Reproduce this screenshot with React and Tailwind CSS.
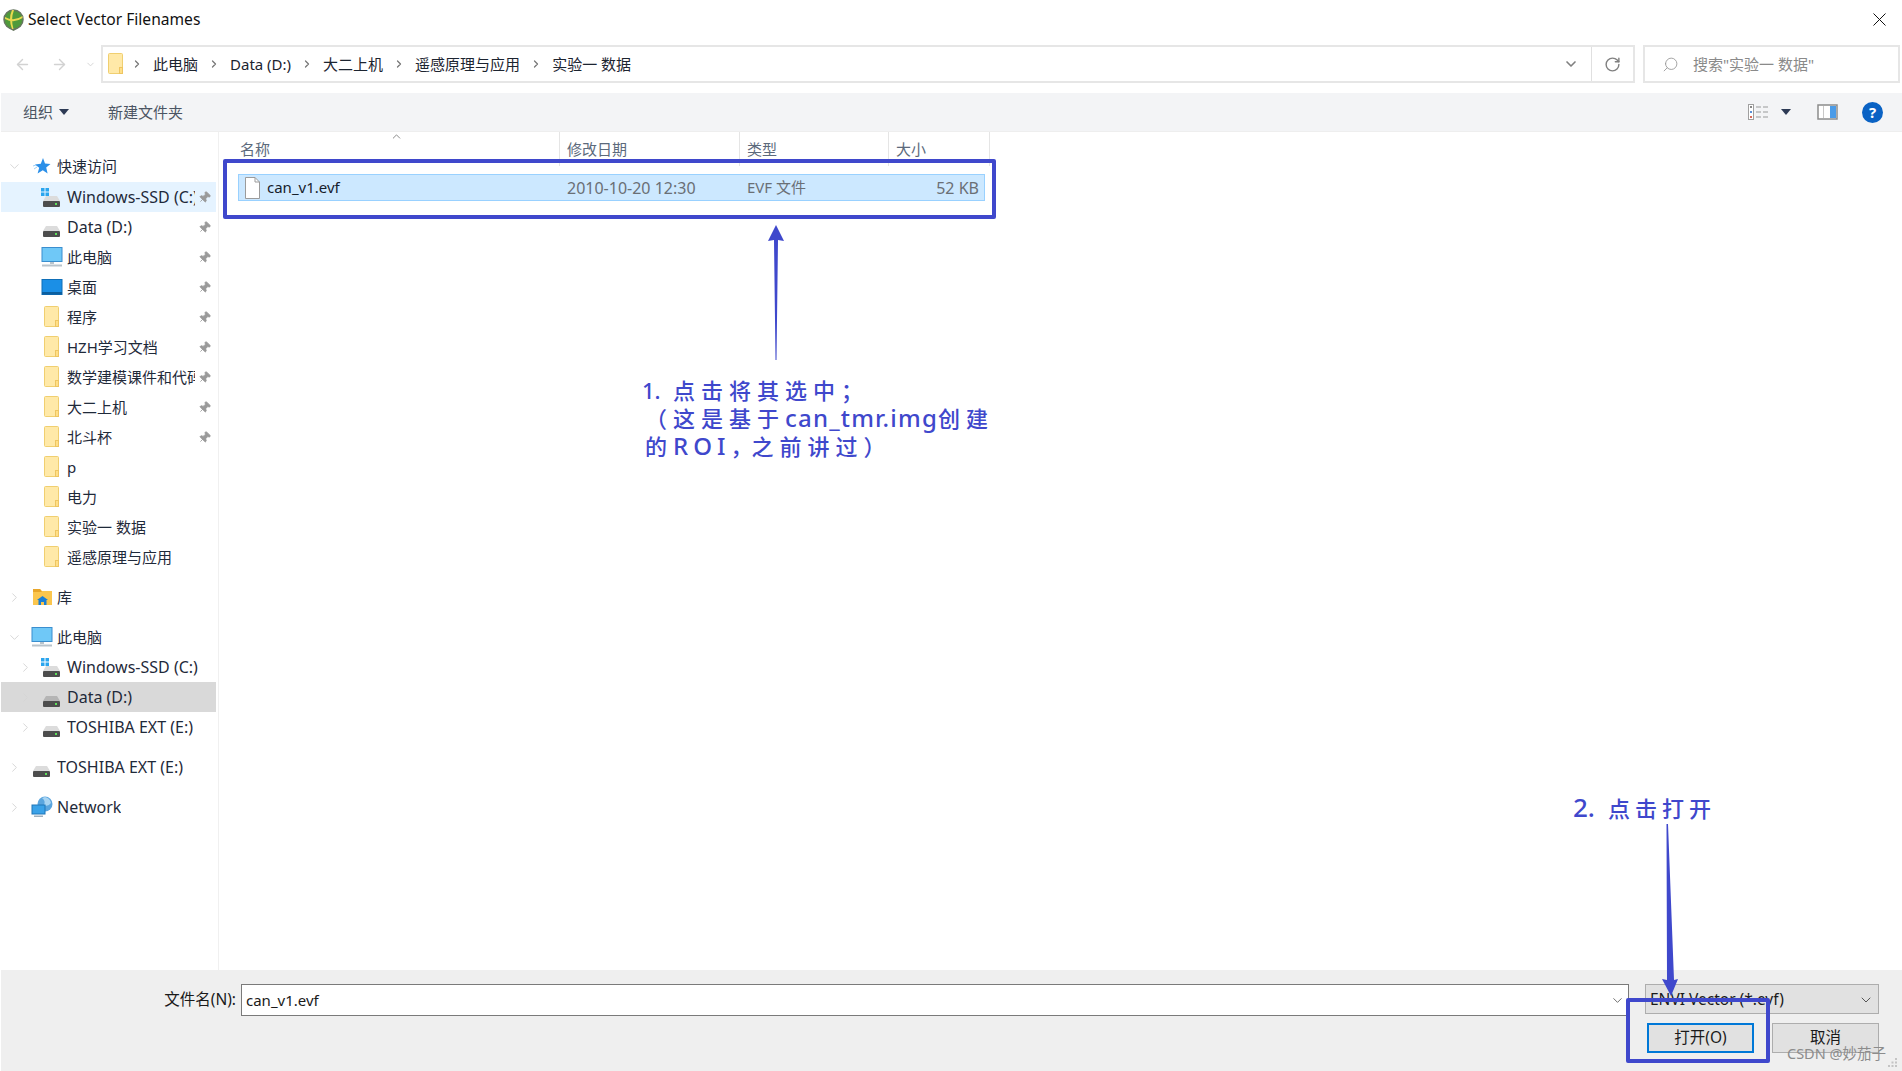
import React from 'react';
import { ArrowLeft, ArrowRight, ChevronDown, ChevronRight, Pin, RotateCw, Search } from 'lucide-react';

const BLUE = '#3f48cc';

const AppIcon = () => (
  <svg width="21" height="22" viewBox="0 0 21 22">
    <circle cx="10.5" cy="10.5" r="9.5" fill="#4f9a3a" stroke="#66755f" strokeWidth="1.5" />
    <path d="M2 8 Q11 13 19.5 7 L19.5 9 Q11 15 2 10Z" fill="#e9d94f" />
    <path d="M9 1 Q5 10 9 20 L10.5 20 Q7.5 10 11 1Z" fill="#e9d94f" />
    <path d="M7 20 L14 20 L10.5 22Z" fill="#66755f" />
  </svg>
);

const FolderIcon = () => (
  <svg width="22" height="22" viewBox="0 0 22 22">
    <rect x="3.5" y="0.5" width="14" height="20" rx="1" fill="#ffe9a8" stroke="#f0cf70" />
    <rect x="14.5" y="14.5" width="3" height="6" fill="#ffdf87" stroke="#eec562" />
  </svg>
);

const DriveIcon = ({ win, dark }) => (
  <svg width="22" height="22" viewBox="0 0 22 22">
    {win && (
      <g fill="#2ba5ee">
        <rect x="0" y="2" width="3.5" height="3.5" />
        <rect x="4.5" y="2" width="3.5" height="3.5" />
        <rect x="0" y="6.5" width="3.5" height="3.5" />
        <rect x="4.5" y="6.5" width="3.5" height="3.5" />
      </g>
    )}
    <path d="M5 10 L16 10 L19 15 L2 15Z" fill={dark ? '#b5b5b5' : '#dcdcdc'} />
    <rect x="2" y="15" width="17" height="6" rx="1" fill="#4d4d4d" />
    <rect x="14" y="17" width="2" height="2" fill="#5ee05a" />
  </svg>
);

const MonitorIcon = () => (
  <svg width="22" height="20" viewBox="0 0 22 20">
    <rect x="1" y="0.5" width="20" height="14" fill="#6fc8f7" stroke="#3a8ecf" />
    <rect x="9" y="15" width="4" height="2" fill="#b9c4cc" />
    <rect x="1" y="17.5" width="20" height="2" fill="#b9c4cc" />
  </svg>
);

const DesktopIcon = () => (
  <svg width="22" height="16" viewBox="0 0 22 16">
    <rect x="1" y="0.5" width="20" height="15" fill="#1b8fe6" stroke="#0f6fb8" />
    <rect x="1" y="13" width="20" height="2.5" fill="#0c5f9f" />
  </svg>
);

const StarIcon = () => (
  <svg width="18" height="18" viewBox="0 0 18 18">
    <path d="M10 1 L12 6.5 L17.5 7 L13.2 10.6 L14.6 16.5 L9.8 13.3 L4.6 16.5 L6.2 10.8 L2 7.5 L7.8 6.8Z" fill="#2b8fe8" />
    <path d="M1 12 L4 10 M0 9 L3 8" stroke="#9fd0f5" strokeWidth="1" />
  </svg>
);

const LibraryIcon = () => (
  <svg width="21" height="18" viewBox="0 0 21 18">
    <path d="M1 1 L8 1 L10 3 L20 3 L20 17 L1 17Z" fill="#fbc64e" />
    <path d="M1 1 L8 1 L10 4 L1 4Z" fill="#e8a62a" />
    <path d="M10.5 8 L16 12 L14.5 12 L14.5 17 L12 17 L12 14 L9 14 L9 17 L6.5 17 L6.5 12 L5 12Z" fill="#1a7fd6" />
  </svg>
);

const NetworkIcon = () => (
  <svg width="22" height="22" viewBox="0 0 22 22">
    <circle cx="14" cy="8" r="7.5" fill="#5aa5de" />
    <path d="M11 2 Q15 5 13 9 Q17 11 20 7 Q19 2 14 1Z" fill="#a8d4f2" />
    <rect x="1" y="9" width="13" height="9" fill="#3aa2e8" stroke="#1f76b8" />
    <rect x="3" y="19.5" width="9" height="1.5" fill="#9fb0bd" />
  </svg>
);

const quick = [
  { label: 'Windows-SSD (C:)', latin: true, icon: <DriveIcon win />, pinned: true, tone: 'hover' },
  { label: 'Data (D:)', latin: true, icon: <DriveIcon />, pinned: true },
  { label: '此电脑', icon: <MonitorIcon />, pinned: true },
  { label: '桌面', icon: <DesktopIcon />, pinned: true },
  { label: '程序', icon: <FolderIcon />, pinned: true },
  { label: 'HZH学习文档', icon: <FolderIcon />, pinned: true },
  { label: '数学建模课件和代码', icon: <FolderIcon />, pinned: true },
  { label: '大二上机', icon: <FolderIcon />, pinned: true },
  { label: '北斗杯', icon: <FolderIcon />, pinned: true },
  { label: 'p', icon: <FolderIcon /> },
  { label: '电力', icon: <FolderIcon /> },
  { label: '实验一 数据', icon: <FolderIcon /> },
  { label: '遥感原理与应用', icon: <FolderIcon /> },
];

const crumbs = ['此电脑', 'Data (D:)', '大二上机', '遥感原理与应用', '实验一 数据'];

// one line of the navigation tree
const TreeRow = ({ label, latin, icon, sub, pinned, chevron, tone, className = '' }) => (
  <div
    className={`flex items-center h-[30px] w-[215px] ml-px ${className} ${
      tone === 'hover' ? 'bg-[#e5f3ff]' : tone === 'active' ? 'bg-[#d9d9d9]' : ''
    }`}
  >
    <div className={`flex items-center shrink-0 ${sub ? 'w-[40px] pl-[17px]' : 'w-[30px] pl-[6px]'}`}>
      {chevron === 'right' && <ChevronRight size={15} strokeWidth={1.5} className="text-[#d4d4d4]" />}
      {chevron === 'down' && <ChevronDown size={15} strokeWidth={1.5} className="text-[#d4d4d4]" />}
    </div>
    <div className="w-[22px] shrink-0 flex justify-center">{icon}</div>
    <div
      className={`ml-1 overflow-hidden whitespace-nowrap text-[#1f2a3a] ${latin ? 'text-[16px]' : 'text-[15px]'} ${
        pinned ? 'w-[128px]' : ''
      }`}
    >
      {label}
    </div>
    {pinned && <Pin size={13} fill="#9a9a9a" strokeWidth={1.5} className="ml-[3px] text-[#9a9a9a] rotate-45 shrink-0" />}
  </div>
);

const Sidebar = () => (
  <div className="w-[219px] shrink-0 border-r border-[#f0f0f0] pt-5">
    <TreeRow className="-mt-px" label="快速访问" icon={<StarIcon />} chevron="down" />
    <div className="mt-px">
      {quick.map((item) => (
        <TreeRow key={item.label} sub {...item} />
      ))}
    </div>
    <TreeRow className="mt-2.5" label="库" icon={<LibraryIcon />} chevron="right" />
    <TreeRow className="mt-2.5" label="此电脑" icon={<MonitorIcon />} chevron="down" />
    <TreeRow sub latin label="Windows-SSD (C:)" icon={<DriveIcon win />} chevron="right" />
    <TreeRow sub latin label="Data (D:)" icon={<DriveIcon dark />} chevron="right" tone="active" />
    <TreeRow sub latin label="TOSHIBA EXT (E:)" icon={<DriveIcon />} chevron="right" />
    <TreeRow className="mt-2.5" latin label="TOSHIBA EXT (E:)" icon={<DriveIcon />} chevron="right" />
    <TreeRow className="mt-2.5" latin label="Network" icon={<NetworkIcon />} chevron="right" />
  </div>
);

const FileList = () => (
  <div className="flex-1 relative">
    <div className="flex h-[34px] items-center text-[15px] text-[#5c6a7c]">
      <div className="w-[341px] pl-[21px] h-full flex items-center border-r border-[#e5e5e5]">名称</div>
      <div className="w-[180px] pl-[7px] h-full flex items-center border-r border-[#e5e5e5]">修改日期</div>
      <div className="w-[149px] pl-[7px] h-full flex items-center border-r border-[#e5e5e5]">类型</div>
      <div className="w-[101px] pl-[7px] h-full flex items-center border-r border-[#e5e5e5]">大小</div>
    </div>
    <ChevronDown size={13} strokeWidth={1.5} className="absolute left-[171px] -top-[2px] rotate-180 text-[#707070]" />
    <div className="mt-[8px] ml-[19px] w-[747px] h-[27px] flex items-center bg-[#cce8ff] border border-[#99d1ff] text-[15px]">
      <svg width="15" height="22" viewBox="0 0 15 22" className="ml-[6px] shrink-0">
        <path d="M0.5 0.5 L10 0.5 L14.5 5 L14.5 21.5 L0.5 21.5Z" fill="#fff" stroke="#9b9b9b" />
        <path d="M10 0.5 L10 5 L14.5 5" fill="none" stroke="#9b9b9b" />
      </svg>
      <div className="ml-[7px] w-[300px] text-[#16202c]">can_v1.evf</div>
      <div className="w-[180px] text-[16px] text-[#6a6f75]">2010-10-20 12:30</div>
      <div className="w-[149px] text-[#6a6f75]">EVF 文件</div>
      <div className="w-[83px] text-right text-[16px] text-[#6a6f75]">52 KB</div>
    </div>
  </div>
);

// handwritten notes and the markers drawn on top of the screenshot
const Annotations = () => (
  <>
    <div className="absolute left-[223px] top-[159px] w-[773px] h-[60px] border-4 border-[#3f48cc] rounded-[2px]" />
    <div className="absolute left-[1626px] top-[998px] w-[144px] h-[65px] border-4 border-[#3f48cc] rounded-[2px]" />
    <svg className="absolute left-0 top-0 pointer-events-none" width="1902" height="1071">
      <polygon points="775.5,360 776.5,360 778,240 784,241 776,225 768,241 774,240" fill={BLUE} />
      <polygon points="1666.5,824 1668,824 1674,980 1678,979 1671,996 1662,979 1667,980" fill={BLUE} />
    </svg>
    <div className="absolute left-[642px] top-[376px] text-[22px] leading-[28px] font-medium text-[#3f48cc] tracking-[6px] whitespace-nowrap">
      <div>
        <span className="inline-block w-[31px] tracking-normal">1.</span>点击将其选中；
      </div>
      <div className="ml-[3px]">
        （这是基于<span className="tracking-[1.2px] text-[24px]">can_tmr.img</span>创建
      </div>
      <div className="ml-[3px]">
        的<span className="tracking-[5px] text-[24px]">ROI</span>
        <span className="inline-block w-[21px] tracking-normal">，</span>之前讲过）
      </div>
    </div>
    <div className="absolute left-[1573px] top-[793px] text-[22px] leading-[28px] font-medium text-[#3f48cc] tracking-[5px] whitespace-nowrap">
      <span className="inline-block w-[35px] tracking-normal text-[26px]">2.</span>点击打开
    </div>
    <div className="absolute left-[1787px] top-[1043px] text-[14.5px] leading-5 text-[#8c8c8c] whitespace-nowrap">CSDN @妙茄子</div>
    <svg className="absolute left-[1888px] top-[1058px]" width="10" height="10" fill="#c4c4c4">
      <rect x="7" y="0" width="2" height="2" />
      <rect x="3.5" y="3.5" width="2" height="2" />
      <rect x="7" y="3.5" width="2" height="2" />
      <rect x="0" y="7" width="2" height="2" />
      <rect x="3.5" y="7" width="2" height="2" />
      <rect x="7" y="7" width="2" height="2" />
    </svg>
  </>
);

export default function App() {
  return (
    <div className="relative w-[1902px] h-[1071px] overflow-hidden flex flex-col bg-white text-[#1a1a1a] [font-family:'Noto_Sans','Noto_Sans_CJK_SC',sans-serif]">
      {/* title bar */}
      <div className="h-[45px] shrink-0 flex items-center pl-[3px] pr-4 pb-[6px]">
        <AppIcon />
        <span className="ml-1 text-[15.6px] text-[#111]">Select Vector Filenames</span>
        <svg width="13" height="13" className="ml-auto" stroke="#111" strokeWidth="1">
          <path d="M0.5 0.5 L12.5 12.5 M12.5 0.5 L0.5 12.5" />
        </svg>
      </div>

      {/* navigation + address + search */}
      <div className="h-[38px] shrink-0 flex items-center">
        <div className="w-[101px] shrink-0 flex items-center pl-[14px] text-[#d2d2d2]">
          <ArrowLeft size={17} strokeWidth={2} />
          <ArrowRight size={17} strokeWidth={2} className="ml-5" />
          <ChevronDown size={11} strokeWidth={2} className="ml-[17px]" />
        </div>
        <div className="w-[1534px] h-full flex items-center border-2 border-[#e6e6e6]">
          <div className="ml-[2px] -mr-[6px]">
            <FolderIcon />
          </div>
          {crumbs.map((c) => (
            <div key={c} className="flex items-center text-[15px] text-[#1c2430]">
              <ChevronRight size={12} strokeWidth={2.5} className="text-[#777] mx-[10px]" />
              {c}
            </div>
          ))}
          <ChevronDown size={16} strokeWidth={2.5} className="ml-auto mr-[12px] text-[#808080]" />
          <div className="w-[42px] h-full border-l border-[#e0e0e0] flex items-center justify-center">
            <RotateCw size={17} strokeWidth={2} className="text-[#808080]" />
          </div>
        </div>
        <div className="ml-2 w-[257px] h-full flex items-center border-2 border-[#e6e6e6] pl-[17px] text-[15px] text-[#8a8a8a]">
          <Search size={17} strokeWidth={1.25} className="-scale-x-100 text-[#999]" />
          <span className="ml-[14px]">搜索"实验一 数据"</span>
        </div>
      </div>

      {/* toolbar */}
      <div className="mt-2.5 h-[39px] shrink-0 flex items-center ml-px bg-[#f3f4f6] border-b border-[#eeeeee] text-[15px] text-[#4b5563]">
        <span className="ml-[22px]">组织</span>
        <span className="ml-[6px] w-0 h-0 border-x-[5px] border-x-transparent border-t-[6px] border-t-[#2d3a55]" />
        <span className="ml-[39px]">新建文件夹</span>
        <svg width="21" height="16" viewBox="0 0 21 16" className="ml-auto">
          <rect x="0.5" y="0.5" width="5" height="15" fill="#fff" stroke="#a0a0a0" />
          <path d="M8 3 H13 M15 3 H20 M8 8 H13 M15 8 H20 M8 13 H13 M15 13 H20" stroke="#9a9a9a" strokeWidth="1.2" />
          <rect x="2" y="2" width="2" height="2" fill="#888" />
          <rect x="2" y="7" width="2" height="2" fill="#5b8fd6" />
          <rect x="2" y="12" width="2" height="2" fill="#d66a5b" />
        </svg>
        <span className="ml-3 w-0 h-0 border-x-[5px] border-x-transparent border-t-[6px] border-t-[#2d3a55]" />
        <svg width="21" height="16" viewBox="0 0 21 16" className="ml-[26px]">
          <rect x="1" y="1" width="19" height="14" fill="#fff" stroke="#8c8c8c" strokeWidth="1.5" />
          <rect x="6" y="2" width="1" height="12" fill="#c8c8c8" />
          <rect x="13" y="2" width="6" height="12" fill="#4a9be8" />
        </svg>
        <div className="ml-[24px] mr-[19px] w-[21px] h-[21px] rounded-full bg-[#0a62c4] flex items-center justify-center text-white text-[15px] font-bold leading-none">?</div>
      </div>

      {/* tree + file list */}
      <div className="flex-1 flex min-h-0">
        <Sidebar />
        <FileList />
      </div>

      {/* filename + buttons */}
      <div className="h-[101px] shrink-0 w-[1901px] ml-px bg-[#efefef] pt-[14px] text-[15px]">
        <div className="flex items-start">
          <div className="w-[235px] h-[32px] flex items-center justify-end text-[15.5px] text-[#1a1a1a]">文件名(N):</div>
          <div className="ml-[5px] w-[1388px] h-[32px] flex items-center bg-white border border-[#7a7a7a] pl-[4px]">
            can_v1.evf
            <ChevronDown size={15} strokeWidth={1.5} className="ml-auto mr-[3px] text-[#666]" />
          </div>
          <div className="ml-4 w-[234px] h-[30px] flex items-center bg-[#e1e1e1] border border-[#adadad] pl-[4px] pt-[2px] text-[15.5px]">
            ENVI Vector (*.evf)
            <ChevronDown size={16} strokeWidth={1.5} className="ml-auto mr-[4px] text-[#555]" />
          </div>
        </div>
        <div className="mt-[7px] flex justify-end pr-[23px] gap-[18px] text-[15.5px]">
          <button className="w-[107px] h-[30px] bg-[#e1e1e1] border-2 border-[#0078d7]">打开(O)</button>
          <button className="w-[107px] h-[30px] bg-[#e1e1e1] border border-[#adadad]">取消</button>
        </div>
      </div>

      <Annotations />
    </div>
  );
}
